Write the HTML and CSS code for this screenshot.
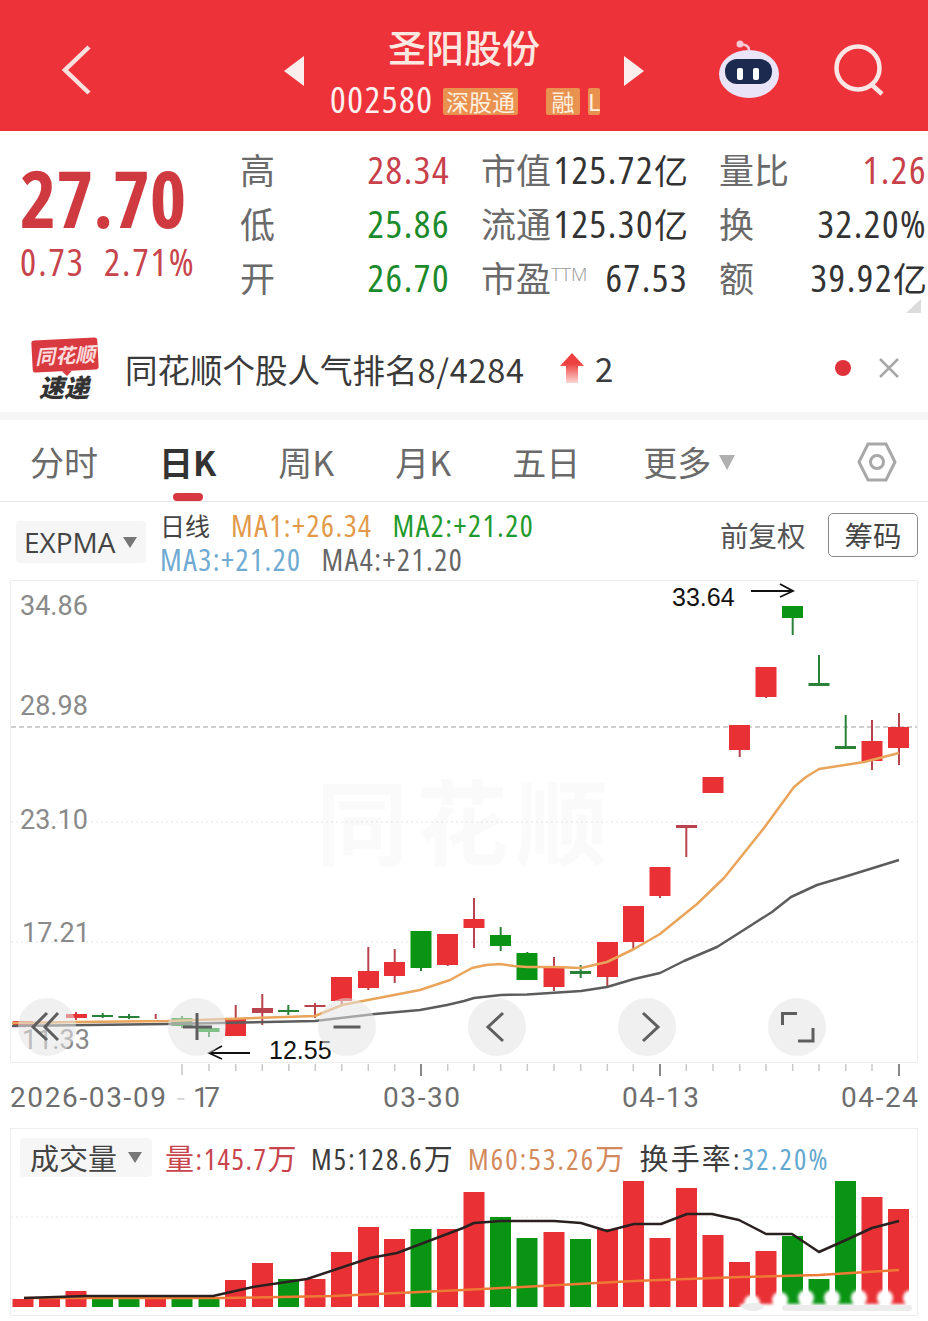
FILE: index.html
```html
<!DOCTYPE html>
<html>
<head>
    <title>圣阳股份</title>
    <link rel="stylesheet" href="styles.css">
</head>
<body>
    <header class="top-bar">
        <svg class="back-icon" viewBox="0 0 32 52"><path d="M28 3 L4 26 L28 49" /></svg>
        <span class="arrow-left"></span>
        <div class="stock-title">
            <div class="stock-name">圣阳股份</div>
            <div class="stock-code">
                <span class="code-num">002580</span>
                <span class="tag tag-sgt">深股通</span>
                <span class="tag tag-rong">融</span>
                <span class="tag tag-l">L</span>
            </div>
        </div>
        <span class="arrow-right"></span>
        <svg class="robot-icon" viewBox="0 0 62 60">
            <path d="M31 11 C31 7 28 6 23 5" fill="none" stroke="#f6c9d4" stroke-width="2.5" />
            <circle cx="22" cy="5" r="3.500" fill="#f6c9d4" />
            <ellipse cx="31" cy="35" rx="30" ry="24" fill="#e9e4f7" />
            <rect x="7" y="20" width="47" height="25" rx="12" fill="#1d2a50" />
            <rect x="19" y="29" width="6" height="12" rx="2" fill="#fff" />
            <rect x="35" y="29" width="6" height="12" rx="2" fill="#fff" />
        </svg>
        <svg class="search-icon" viewBox="0 0 52 52"><circle cx="24" cy="24" r="21.5" /><path d="M38 41 L48 50" /></svg>
    </header>

    <section class="quote">
        <div class="price-box">
            <div class="price">27.70</div>
            <div class="price-change"><span>0.73</span><span>2.71%</span></div>
        </div>
        <div class="stats">
            <div class="stat"><span class="stat-label">高</span><span class="num up">28.34</span></div>
            <div class="stat"><span class="stat-label">市值</span><span class="num">125.72<span class="unit">亿</span></span></div>
            <div class="stat"><span class="stat-label">量比</span><span class="num up">1.26</span></div>
            <div class="stat"><span class="stat-label">低</span><span class="num down">25.86</span></div>
            <div class="stat"><span class="stat-label">流通</span><span class="num">125.30<span class="unit">亿</span></span></div>
            <div class="stat"><span class="stat-label">换</span><span class="num">32.20%</span></div>
            <div class="stat"><span class="stat-label">开</span><span class="num down">26.70</span></div>
            <div class="stat"><span class="stat-label">市盈<sup class="ttm">TTM</sup></span><span class="num">67.53</span></div>
            <div class="stat"><span class="stat-label">额</span><span class="num">39.92<span class="unit">亿</span></span></div>
        </div>
        <span class="corner"></span>
    </section>

    <section class="news">
        <div class="news-logo">
            <div class="news-logo-top">同花顺</div>
            <div class="news-logo-bottom">速递</div>
        </div>
        <div class="news-text">同花顺个股人气排名<span class="news-rank">8/4284</span></div>
        <svg class="rank-arrow" viewBox="0 0 24 30">
            <defs>
                <linearGradient id="rankFade" x1="0" y1="0" x2="0" y2="1">
                    <stop offset="0.35" stop-color="#ee4040" />
                    <stop offset="1" stop-color="#fbd5d2" />
                </linearGradient>
            </defs>
            <path d="M12 0 L24 13 L18 13 L18 30 L6 30 L6 13 L0 13 Z" fill="url(#rankFade)" />
        </svg>
        <div class="rank-num">2</div>
        <span class="news-dot"></span>
        <svg class="news-close" viewBox="0 0 20 20"><path d="M1 1 L19 19 M19 1 L1 19" /></svg>
    </section>

    <nav class="tabs">
        <span class="tab">分时</span>
        <span class="tab tab-active">日K</span>
        <span class="tab">周K</span>
        <span class="tab">月K</span>
        <span class="tab tab-wide">五日</span>
        <span class="tab tab-more">更多<i class="caret caret-more"></i></span>
        <svg class="hex-icon" viewBox="0 0 40 40"><path d="M11 2 L29 2 L38 20 L29 38 L11 38 L2 20 Z" /><circle cx="20" cy="20" r="6.500" /></svg>
    </nav>

    <section class="indicators">
        <div class="select-box expma">EXPMA<i class="caret"></i></div>
        <div class="legend">
            <div class="legend-row"><span class="legend-day">日线</span><span class="ma1">MA1:+26.34</span><span class="ma2">MA2:+21.20</span></div>
            <div class="legend-row"><span class="ma3">MA3:+21.20</span><span class="ma4">MA4:+21.20</span></div>
        </div>
        <div class="fq">前复权</div>
        <div class="chips">筹码</div>
    </section>

    <section class="chart">
        <svg class="chart-svg" viewBox="0 580 928 537">
            <rect class="frame" x="10.500" y="580.500" width="907" height="482" />
            <text class="watermark" x="316" y="858" textLength="292">同花顺</text>
            <line class="grid" x1="11" y1="822" x2="917" y2="822" />
            <line class="grid" x1="11" y1="942" x2="917" y2="942" />
            <line class="grid-main" x1="11" y1="727" x2="917" y2="727" />

            <text class="axis-y" x="20" y="615">34.86</text>
            <text class="axis-y" x="20" y="715">28.98</text>
            <text class="axis-y" x="20" y="829">23.10</text>
            <text class="axis-y" x="22" y="942">17.21</text>
            <text class="axis-y" x="22" y="1049">11.33</text>

            <!-- candles: up -->
            <g class="wick-up">
                <line x1="76" y1="1012" x2="76" y2="1020" />
                <line x1="155.700" y1="1014" x2="155.700" y2="1019" />
                <line x1="235.700" y1="1005" x2="235.700" y2="1036" />
                <line x1="262.300" y1="994" x2="262.300" y2="1025" />
                <line x1="315" y1="1003" x2="315" y2="1018" />
                <line x1="341.700" y1="977" x2="341.700" y2="1006" />
                <line x1="368.300" y1="947" x2="368.300" y2="990" />
                <line x1="394.700" y1="949" x2="394.700" y2="983" />
                <line x1="447.700" y1="934" x2="447.700" y2="966" />
                <line x1="474" y1="898" x2="474" y2="948" />
                <line x1="554" y1="957" x2="554" y2="991" />
                <line x1="607.300" y1="942" x2="607.300" y2="987" />
                <line x1="633.300" y1="906" x2="633.300" y2="950" />
                <line x1="660" y1="867" x2="660" y2="898" />
                <line x1="686.300" y1="826" x2="686.300" y2="857" />
                <line x1="739.700" y1="725" x2="739.700" y2="757" />
                <line x1="766" y1="667" x2="766" y2="698" />
                <line x1="872" y1="720" x2="872" y2="770" />
                <line x1="899" y1="713" x2="899" y2="765" />
            </g>
            <g class="body-up">
                <rect x="13" y="1021" width="20" height="4" />
                <rect x="66" y="1014" width="21" height="4" />
                <rect x="225" y="1018" width="21" height="18" />
                <rect class="flat-up" x="252" y="1008" width="21" height="5" />
                <rect class="flat-up" x="304.500" y="1005" width="21" height="2" />
                <rect x="331" y="977" width="21" height="24" />
                <rect x="358" y="971" width="21" height="17" />
                <rect x="384" y="962" width="21" height="14" />
                <rect x="437" y="934" width="21" height="31" />
                <rect x="463.500" y="919" width="21" height="9" />
                <rect x="543.500" y="966" width="21" height="21" />
                <rect x="597" y="942" width="21" height="35" />
                <rect x="623" y="906" width="21" height="36" />
                <rect x="649.500" y="867" width="21" height="29" />
                <rect class="flat-up" x="676" y="825" width="21" height="3" />
                <rect x="702.500" y="777" width="21" height="16" />
                <rect x="729" y="725" width="21" height="25" />
                <rect x="755.500" y="667" width="21" height="30" />
                <rect x="861.500" y="741" width="21" height="20" />
                <rect x="888" y="727" width="21" height="21" />
            </g>
            <!-- candles: down -->
            <g class="wick-down">
                <line x1="102.700" y1="1013" x2="102.700" y2="1018" />
                <line x1="129" y1="1014" x2="129" y2="1019" />
                <line x1="182" y1="1016" x2="182" y2="1028" />
                <line x1="209" y1="1026" x2="209" y2="1037" />
                <line x1="288.300" y1="1005" x2="288.300" y2="1015" />
                <line x1="421" y1="931" x2="421" y2="971" />
                <line x1="500.700" y1="927" x2="500.700" y2="951" />
                <line x1="527.300" y1="952" x2="527.300" y2="980" />
                <line x1="580.700" y1="965" x2="580.700" y2="978" />
                <line x1="792.700" y1="606" x2="792.700" y2="635" />
                <line x1="819" y1="655" x2="819" y2="684" />
                <line x1="845.700" y1="715" x2="845.700" y2="747" />
            </g>
            <g class="body-down">
                <rect class="flat-down" x="92" y="1015" width="21" height="2" />
                <rect class="flat-down" x="118.500" y="1016" width="21" height="2" />
                <rect x="171.500" y="1018" width="21" height="8" />
                <rect x="198.500" y="1028" width="21" height="4" />
                <rect class="flat-down" x="278" y="1010" width="21" height="2" />
                <rect x="410.500" y="931" width="21" height="37" />
                <rect x="490" y="935" width="21" height="11" />
                <rect x="516.500" y="953" width="21" height="27" />
                <rect class="flat-down" x="570" y="971" width="21" height="3" />
                <rect x="782" y="606" width="21" height="12" />
                <rect class="flat-down" x="808.500" y="683" width="21" height="3" />
                <rect class="flat-down" x="835" y="746" width="21" height="3" />
            </g>

            <path class="line-gray" d="M12 1026 L167 1024 L315 1021 L375 1014 L420 1010 L447 1005 L464 1001 L474 998 L501 995 L527 994.500 L581 991 L607 987 L634 979 L660 973 L684 961 L717 947 L750 926 L772 912 L791 897 L817 885 L844 877 L899 860" />
            <path class="line-orange" d="M12 1023 L77 1022 L167 1021 L315 1016 L342 1005 L420 990 L450 980 L472 968 L486 965 L500 964 L514 966 L527 967 L554 967 L581 968 L607 962 L634 949 L660 934 L697 904 L724 878 L764 828 L794 787 L806 777 L819 769 L864 762 L899 753" />

            <text class="note" x="672" y="606">33.64</text>
            <path class="note-arrow" d="M751 591 L792 591 M780 584 L793 591 L780 597" />
            <text class="note" x="269" y="1059">12.55</text>
            <path class="note-arrow" d="M250 1053 L210 1053 M222 1046 L209 1053 L222 1059" />

            <g class="ticks">
                <line class="tick-soft" x1="182" y1="1064" x2="182" y2="1075" />
                <line x1="209" y1="1064" x2="209" y2="1071" />
                <line x1="235.700" y1="1064" x2="235.700" y2="1071" />
                <line x1="262.300" y1="1064" x2="262.300" y2="1071" />
                <line x1="288.800" y1="1064" x2="288.800" y2="1071" />
                <line x1="315.300" y1="1064" x2="315.300" y2="1071" />
                <line x1="341.700" y1="1064" x2="341.700" y2="1071" />
                <line x1="368.300" y1="1064" x2="368.300" y2="1071" />
                <line x1="394.700" y1="1064" x2="394.700" y2="1071" />
                <line class="tick-big" x1="421" y1="1064" x2="421" y2="1076" />
                <line x1="447.700" y1="1064" x2="447.700" y2="1071" />
                <line x1="474" y1="1064" x2="474" y2="1071" />
                <line x1="500.700" y1="1064" x2="500.700" y2="1071" />
                <line x1="527.300" y1="1064" x2="527.300" y2="1071" />
                <line x1="554" y1="1064" x2="554" y2="1071" />
                <line x1="580.700" y1="1064" x2="580.700" y2="1071" />
                <line x1="607.300" y1="1064" x2="607.300" y2="1071" />
                <line x1="633.300" y1="1064" x2="633.300" y2="1071" />
                <line class="tick-big" x1="660" y1="1064" x2="660" y2="1076" />
                <line x1="686.300" y1="1064" x2="686.300" y2="1071" />
                <line x1="713" y1="1064" x2="713" y2="1071" />
                <line x1="739.700" y1="1064" x2="739.700" y2="1071" />
                <line x1="766" y1="1064" x2="766" y2="1071" />
                <line x1="792.700" y1="1064" x2="792.700" y2="1071" />
                <line x1="819" y1="1064" x2="819" y2="1071" />
                <line x1="845.700" y1="1064" x2="845.700" y2="1071" />
                <line x1="872" y1="1064" x2="872" y2="1071" />
                <line class="tick-big" x1="899" y1="1064" x2="899" y2="1076" />
            </g>
            <text class="axis-x" x="10" y="1107" textLength="156">2026-03-09</text>
            <text class="axis-x axis-faint" x="177" y="1107">-</text>
            <text class="axis-x" x="193" y="1107" textLength="27">17</text>
            <text class="axis-x" x="383" y="1107" textLength="77">03-30</text>
            <text class="axis-x" x="622" y="1107" textLength="77">04-13</text>
            <text class="axis-x" x="841" y="1107" textLength="77">04-24</text>
        </svg>
        <div class="chart-buttons">
            <span class="round-btn"><svg viewBox="0 0 40 40"><path d="M20 6 L6 20 L20 33 M31 6 L18 20 L31 33" /></svg></span>
            <span class="round-btn"><svg viewBox="0 0 40 40"><path d="M6 20 L35 20 M20 6 L20 33" /></svg></span>
            <span class="round-btn"><svg viewBox="0 0 40 40"><path d="M6.500 20 L33.500 20" /></svg></span>
            <span class="round-btn"><svg viewBox="0 0 40 40"><path d="M26 6 L11 20 L26 34" /></svg></span>
            <span class="round-btn"><svg viewBox="0 0 40 40"><path d="M16 6 L31 20 L16 34" /></svg></span>
            <span class="round-btn"><svg viewBox="0 0 40 40"><path d="M20 6.500 L5.500 6.500 L5.500 18 M36 21 L36 34 L21 34" /></svg></span>
        </div>
    </section>

    <section class="volume">
        <div class="volume-head">
            <div class="select-box vol-select">成交量<i class="caret"></i></div>
            <span class="vol-item vol-up">量:145.7万</span>
            <span class="vol-item vol-m5">M5:128.6万</span>
            <span class="vol-item vol-m60">M60:53.26万</span>
            <span class="vol-item vol-m5">换手率:<span class="vol-rate">32.20%</span></span>
        </div>
        <svg class="volume-svg" viewBox="0 1180 928 135">
            <defs>
                <filter id="softEdge"><feGaussianBlur stdDeviation="1.500" /></filter>
            </defs>
            <line class="grid" x1="11" y1="1217" x2="917" y2="1217" />
            <g class="vol-red">
                <rect x="12.500" y="1299" width="21" height="8" />
                <rect x="39" y="1298" width="21" height="9" />
                <rect x="65.500" y="1291" width="21" height="16" />
                <rect x="145" y="1297" width="21" height="10" />
                <rect x="225" y="1280" width="21" height="27" />
                <rect x="252" y="1263" width="21" height="44" />
                <rect x="304.500" y="1279" width="21" height="28" />
                <rect x="331" y="1252" width="21" height="55" />
                <rect x="358" y="1227" width="21" height="80" />
                <rect x="384" y="1239" width="21" height="68" />
                <rect x="437" y="1229" width="21" height="78" />
                <rect x="463.500" y="1192" width="21" height="115" />
                <rect x="543.500" y="1232" width="21" height="75" />
                <rect x="597" y="1229" width="21" height="78" />
                <rect x="623" y="1181" width="21" height="126" />
                <rect x="649.500" y="1238" width="21" height="69" />
                <rect x="676" y="1188" width="21" height="119" />
                <rect x="702.500" y="1235" width="21" height="72" />
                <rect x="729" y="1262" width="21" height="45" />
                <rect x="755.500" y="1251" width="21" height="56" />
                <rect x="861.500" y="1197" width="21" height="110" />
                <rect x="888" y="1209" width="21" height="98" />
            </g>
            <g class="vol-green">
                <rect x="92" y="1297" width="21" height="10" />
                <rect x="118.500" y="1297" width="21" height="10" />
                <rect x="171.500" y="1298" width="21" height="9" />
                <rect x="198.500" y="1299" width="21" height="8" />
                <rect x="278" y="1279" width="21" height="28" />
                <rect x="410.500" y="1229" width="21" height="78" />
                <rect x="490" y="1217" width="21" height="90" />
                <rect x="516.500" y="1238" width="21" height="69" />
                <rect x="570" y="1239" width="21" height="68" />
                <rect x="782" y="1236" width="21" height="71" />
                <rect x="808.500" y="1279" width="21" height="28" />
                <rect x="835" y="1181" width="21" height="126" />
            </g>
            <path class="vol-line-orange" d="M24 1298 L223 1298 L333 1296 L463 1290 L634 1281 L741 1277 L819 1275 L899 1270" />
            <path class="vol-line-black" d="M24 1298 L87 1296 L213 1296 L253 1287 L307 1279 L370 1258 L397 1253 L463 1228 L474 1223 L501 1221 L554 1221 L581 1223 L607 1231 L634 1224 L661 1224 L687 1214 L712 1214 L739 1220 L766 1234 L792 1234 L819 1252 L846 1240 L872 1228 L899 1221" />
            <g class="fade-strip" filter="url(#softEdge)">
                <circle cx="752" cy="1303" r="8" />
                <circle cx="780" cy="1300" r="8" />
                <circle cx="806" cy="1298" r="8" />
                <circle cx="832" cy="1298" r="8" />
                <circle cx="859" cy="1298" r="8" />
                <circle cx="885" cy="1298" r="8" />
                <circle cx="911" cy="1298" r="8" />
                <rect x="740" y="1304" width="178" height="12" />
            </g>
            <ellipse class="fade-mark" cx="753" cy="1307" rx="11" ry="4" />
            <rect class="fade-mark" x="782" y="1305" width="130" height="6" rx="3" />
        </svg>
    </section>
</body>
</html>
```

FILE: styles.css
```css
* {
    box-sizing: border-box;
}
body {
    margin: 0;
    width: 928px;
    height: 1321px;
    overflow: hidden;
    background: white;
    font-family: "Noto Sans CJK SC", "Liberation Sans", sans-serif;
    color: #333;
}
.num, .price, .price-change, .code-num, .legend, .vol-item {
    font-family: "Open Sans", "Noto Sans CJK SC", sans-serif;
    font-stretch: 75%;
    white-space: nowrap;
}

/* top bar */
.top-bar {
    display: flex;
    align-items: center;
    height: 131px;
    background-color: #ee3239;
    color: white;
}
.back-icon {
    width: 32px;
    height: 52px;
    margin: 8px 0 0 61px;
    fill: none;
    stroke: #fbe0e0;
    stroke-width: 4.5;
}
.arrow-left, .arrow-right {
    width: 0;
    height: 0;
    margin-top: 11px;
    border-top: 15px solid transparent;
    border-bottom: 15px solid transparent;
}
.arrow-left {
    margin-left: 191px;
    border-right: 20px solid #fdeeee;
}
.arrow-right {
    border-left: 20px solid #fdeeee;
}
.stock-title {
    align-self: flex-start;
    width: 320px;
    padding-top: 21px;
}
.stock-name {
    height: 50px;
    font-size: 38px;
    font-weight: 500;
    line-height: 50px;
    text-align: center;
    color: #fde9e2;
}
.stock-code {
    display: flex;
    align-items: center;
    height: 28px;
    margin-top: 16px;
    padding-left: 26px;
}
.code-num {
    width: 113px;
    margin-top: -6px;
    font-size: 37px;
    letter-spacing: 1.500px;
    color: #fdf0ee;
}
.tag {
    display: block;
    height: 27px;
    line-height: 27px;
    font-size: 23px;
    background-color: #e9924f;
    color: #fff0e0;
    text-align: center;
    border-radius: 2px;
}
.tag-sgt {
    width: 75px;
}
.tag-rong {
    width: 34px;
    margin-left: 28px;
}
.tag-l {
    width: 12px;
    margin-left: 8px;
    overflow: hidden;
}
.robot-icon {
    width: 62px;
    height: 60px;
    margin: 6px 0 0 74px;
}
.search-icon {
    width: 52px;
    height: 52px;
    margin: 8px 0 0 54px;
    fill: none;
    stroke: #fbe6e6;
    stroke-width: 4.5;
}

/* quote */
.quote {
    position: relative;
    display: flex;
    height: 199px;
}
.price-box {
    width: 240px;
    padding: 27px 0 0 20px;
}
.price {
    height: 80px;
    font-size: 78px;
    line-height: 80px;
    font-weight: bold;
    color: #cf3a41;
}
.price-change {
    display: flex;
    gap: 19px;
    margin-top: 1px;
    font-size: 38px;
    line-height: 44px;
    letter-spacing: 2px;
    color: #c8444c;
}
.stats {
    display: grid;
    grid-template-columns: 210px 207px 208px;
    grid-auto-rows: 54px;
    column-gap: 31px;
    margin-top: 12px;
}
.stat {
    display: flex;
    justify-content: space-between;
    align-items: center;
    white-space: nowrap;
    margin-top: -4px;
}
.stat-label {
    font-size: 35px;
    color: #6a6a6a;
}
.ttm {
    font-family: "Open Sans", sans-serif;
    font-size: 19px;
    font-weight: 300;
    color: #999;
    vertical-align: 11px;
    line-height: 0;
}
.num {
    font-size: 39px;
    font-weight: 500;
    letter-spacing: 1.500px;
    color: #333;
}
.unit {
    font-size: 34px;
    font-weight: 400;
    letter-spacing: 0;
}
.up {
    color: #c8404a;
}
.down {
    color: #1a8a2a;
}
.corner {
    position: absolute;
    right: 7px;
    top: 168px;
    width: 0;
    height: 0;
    border-left: 15px solid transparent;
    border-bottom: 14px solid #dcdcdc;
}

/* news bar */
.news {
    display: flex;
    align-items: center;
    height: 82px;
    padding: 0 0 6px 30px;
}
.news-logo {
    width: 68px;
    height: 62px;
    margin-top: 4px;
}
.news-logo-top {
    position: relative;
    height: 32px;
    margin-left: 2px;
    background-color: #d93a40;
    border-radius: 3px;
    color: #fbdcdc;
    font-size: 20px;
    line-height: 31px;
    font-weight: bold;
    font-style: italic;
    text-align: center;
    transform: rotate(-3deg);
}
.news-logo-top::after {
    content: "";
    position: absolute;
    left: 29px;
    bottom: -5px;
    border-left: 5px solid transparent;
    border-right: 5px solid transparent;
    border-top: 5px solid #d93a40;
}
.news-logo-bottom {
    font-size: 25px;
    line-height: 30px;
    font-weight: 900;
    font-style: italic;
    text-align: center;
    color: #333;
}
.news-text {
    margin-left: 27px;
    width: 400px;
    font-size: 32.500px;
    white-space: nowrap;
    color: #3a3a3a;
}
.news-rank {
    letter-spacing: 0.700px;
}
.rank-arrow {
    width: 24px;
    height: 30px;
    margin-left: 35px;
}
.rank-num {
    margin-left: 11px;
    font-size: 33px;
    color: #3a3a3a;
}
.news-dot {
    width: 16px;
    height: 16px;
    margin-left: 222px;
    border-radius: 50%;
    background-color: #e0323a;
}
.news-close {
    width: 20px;
    height: 20px;
    margin-left: 28px;
    fill: none;
    stroke: #a8a8a8;
    stroke-width: 2.500;
}

/* tabs */
.tabs {
    display: flex;
    align-items: center;
    gap: 61px;
    height: 90px;
    padding: 3px 0 0 30px;
    border-top: 8px solid #f6f6f6;
    border-bottom: 1px solid #e6e6e6;
}
.tab {
    position: relative;
    font-size: 34px;
    line-height: 60px;
    color: #6a6a6a;
    white-space: nowrap;
}
.tab-wide {
    margin-right: 2px;
}
.tab-active {
    margin-right: 1px;
    font-weight: bold;
    color: #333;
}
.tab-active::after {
    content: "";
    position: absolute;
    left: 14px;
    bottom: -9px;
    width: 30px;
    height: 8px;
    border-radius: 4px;
    background-color: #d8383f;
}
.tab-more {
    display: flex;
    align-items: center;
}
.caret {
    display: inline-block;
    width: 0;
    height: 0;
    border-left: 7px solid transparent;
    border-right: 7px solid transparent;
    border-top: 11px solid #777;
}
.caret-more {
    margin-left: 8px;
    border-left-width: 8px;
    border-right-width: 8px;
    border-top: 15px solid #b0b0b0;
}
.hex-icon {
    width: 40px;
    height: 40px;
    margin-left: 61px;
    fill: none;
    stroke: #a8a8a8;
    stroke-width: 3;
}

/* indicator row */
.indicators {
    display: flex;
    align-items: center;
    height: 78px;
    padding-left: 16px;
}
.select-box {
    display: flex;
    align-items: center;
    background-color: #f6f6f6;
    border-radius: 4px;
}
.expma {
    justify-content: space-between;
    width: 130px;
    height: 42px;
    margin-top: 2px;
    padding: 0 9px 0 8px;
    font-family: "Open Sans", sans-serif;
    font-size: 28px;
    color: #444;
}
.legend {
    width: 560px;
    margin: 2px 0 0 14px;
    font-size: 30.500px;
    line-height: 34px;
    letter-spacing: 1.500px;
}
.legend-row {
    display: flex;
    gap: 20px;
    white-space: nowrap;
}
.legend-day {
    font-family: "Noto Sans CJK SC", sans-serif;
    font-size: 25px;
    letter-spacing: 0;
    color: #444;
    margin-right: 1px;
}
.ma1 {
    color: #e29a4a;
}
.ma2 {
    color: #1f9a2c;
}
.ma3 {
    color: #6faad2;
}
.ma4 {
    color: #666;
}
.fq {
    width: 108px;
    margin-top: -14px;
    font-size: 28.500px;
    color: #555;
}
.chips {
    width: 90px;
    height: 44px;
    margin-bottom: 13px;
    border: 1px solid #8a8a8a;
    border-radius: 5px;
    font-size: 28.500px;
    line-height: 42px;
    text-align: center;
    color: #444;
}

/* chart */
.chart {
    position: relative;
    height: 537px;
}
.chart-svg {
    display: block;
    width: 928px;
    height: 537px;
}
.frame {
    fill: white;
    stroke: #eeeeee;
}
.grid {
    stroke: #e4e4e4;
    stroke-dasharray: 2 3;
}
.grid-main {
    stroke: #a0a0a0;
    stroke-dasharray: 5 3;
}
.watermark {
    font-family: "Noto Sans CJK SC", sans-serif;
    font-size: 92px;
    font-weight: bold;
    fill: #fafafa;
}
.axis-y {
    font-family: Roboto, sans-serif;
    font-size: 27px;
    fill: #8a8a8a;
}
.wick-up line, .wick-down line {
    stroke-width: 2;
}
.wick-up line {
    stroke: #b8434c;
}
.wick-down line {
    stroke: #2a8238;
}
.body-up rect {
    fill: #e93035;
}
.body-up .flat-up {
    fill: #b8434c;
}
.body-down rect {
    fill: #0a9414;
}
.body-down .flat-down {
    fill: #2a8238;
}
.line-gray, .line-orange, .vol-line-black, .vol-line-orange {
    fill: none;
    stroke-linejoin: round;
}
.line-gray {
    stroke: #5c5c5c;
    stroke-width: 2.500;
}
.line-orange {
    stroke: #e9a45a;
    stroke-width: 2.500;
}
.note {
    font-family: "Liberation Sans", sans-serif;
    font-size: 25px;
    fill: #111;
}
.note-arrow {
    fill: none;
    stroke: #111;
    stroke-width: 1.800;
}
.ticks line {
    stroke: #c8c8c8;
    stroke-width: 1.500;
}
.ticks .tick-big {
    stroke: #888;
    stroke-width: 2;
}
.ticks .tick-soft {
    stroke: #d4d4d4;
    stroke-width: 2;
}
.axis-x {
    font-family: Roboto, sans-serif;
    font-size: 28px;
    fill: #6e6e6e;
}
.axis-faint {
    fill: #d8d8d8;
}
.chart-buttons {
    position: absolute;
    left: 18px;
    top: 418px;
    display: flex;
    gap: 92px;
}
.round-btn {
    display: flex;
    align-items: center;
    justify-content: center;
    width: 58px;
    height: 58px;
    border-radius: 50%;
    background: rgba(228, 228, 228, 0.55);
}
.round-btn svg {
    width: 40px;
    height: 40px;
    fill: none;
    stroke: #5e5e5e;
    stroke-width: 3;
}

/* volume */
.volume {
    height: 188px;
    margin: 11px 10px 0;
    border: 1px solid #eeeeee;
    overflow: hidden;
}
.volume-head {
    display: flex;
    align-items: center;
    height: 50px;
    padding: 6px 0 0 9px;
    white-space: nowrap;
}
.vol-select {
    justify-content: space-between;
    width: 132px;
    height: 39px;
    margin-right: 13px;
    padding: 0 10px;
    font-size: 29px;
    color: #444;
}
.vol-item {
    margin-right: 13px;
    font-size: 29px;
    letter-spacing: 2.200px;
}
.vol-up {
    letter-spacing: 1.600px;
    color: #c8444c;
}
.vol-m5 {
    color: #3c3c3c;
}
.vol-m60 {
    color: #d28a5c;
}
.vol-rate {
    color: #62a8cf;
}
.volume-svg {
    display: block;
    width: 928px;
    height: 135px;
    margin: 1px 0 0 -11px;
}
.vol-red rect {
    fill: #e93035;
}
.vol-green rect {
    fill: #0a9414;
}
.vol-line-black {
    stroke: #2b2020;
    stroke-width: 2.500;
}
.vol-line-orange {
    stroke: #ee7a35;
    stroke-width: 2.500;
}
.fade-strip {
    fill: white;
}
.fade-mark {
    fill: #ececec;
}
```
